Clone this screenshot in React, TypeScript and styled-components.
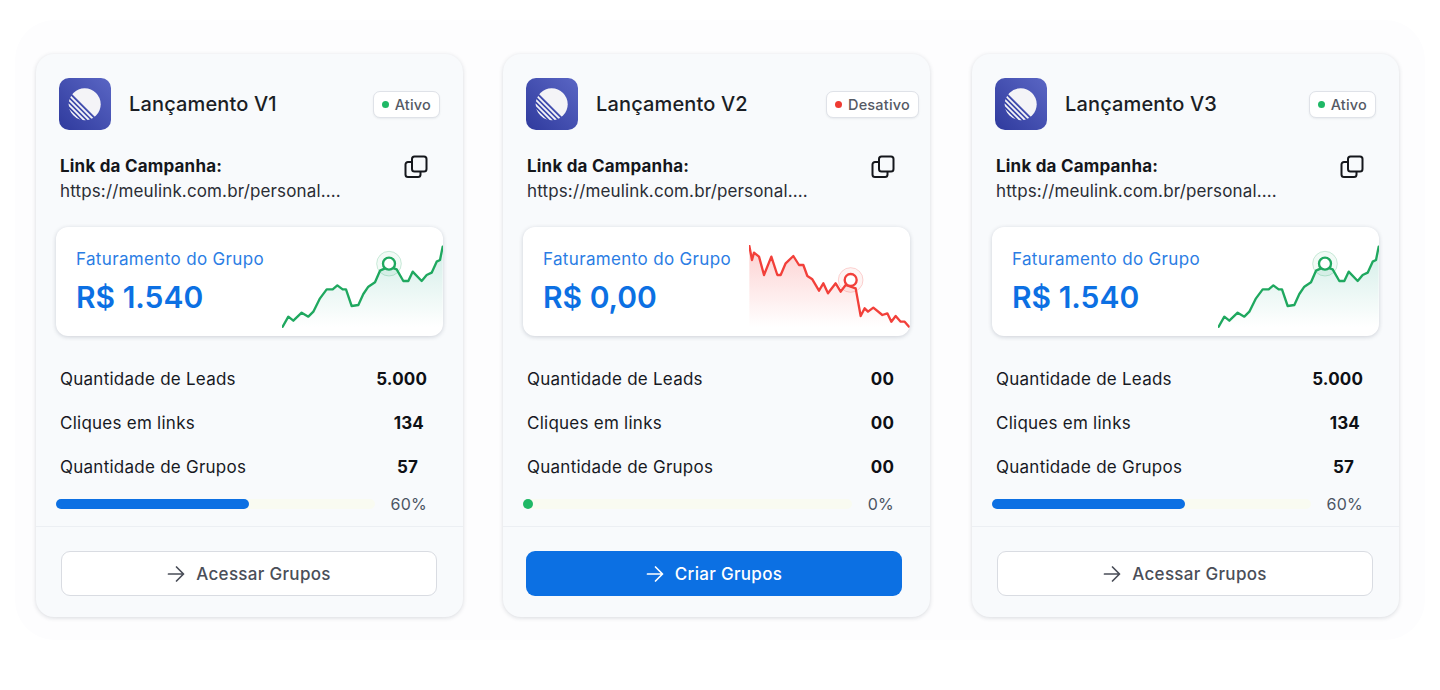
import { createGlobalStyle, styled } from 'styled-components'

const GlobalStyle = createGlobalStyle`
  html, body {
    margin: 0;
    background: #fff;
    font-family: Inter, 'Liberation Sans', sans-serif;
    -webkit-font-smoothing: antialiased;
  }
`

const Backdrop = styled.main`
  box-sizing: border-box;
  width: 1410px;
  height: 620px;
  margin: 20px 0 0 15px;
  padding: 34px 0 0 21px;
  background: #fdfdfe;
  border-radius: 40px;
`

const Cards = styled.div`
  display: grid;
  grid-template-columns: 467px 469px 427px;
`

const Card = styled.article`
  box-sizing: border-box;
  display: flex;
  flex-direction: column;
  width: 427px;
  height: 563px;
  padding-top: 24px;
  background: #f8fafc;
  border-radius: 18px;
  box-shadow: 0 1px 4px rgba(50, 60, 80, 0.18);
`

const Header = styled.header<{ $badgeInset: number }>`
  display: flex;
  align-items: center;
  gap: 18px;
  padding: 0 ${(p) => p.$badgeInset}px 0 23px;
`

const Title = styled.h2`
  flex: 1;
  margin: 0;
  font-size: 20px;
  font-weight: 500;
  letter-spacing: 0.15px;
  color: #1b1e25;
`

const Badge = styled.span`
  display: flex;
  align-items: center;
  gap: 6px;
  height: 27px;
  box-sizing: border-box;
  padding: 0 8px;
  font-size: 14.5px;
  font-weight: 450;
  letter-spacing: 0.2px;
  color: #555a65;
  background: #fff;
  border: 1.5px solid #dfe2e8;
  border-radius: 7px;
  box-shadow: 0 1px 2px rgba(50, 60, 80, 0.08);
`

const Dot = styled.i<{ $color: string }>`
  width: 7px;
  height: 7px;
  border-radius: 50%;
  background: ${(p) => p.$color};
`

const LinkBlock = styled.section`
  display: flex;
  justify-content: space-between;
  padding: 24px 35px 0 24px;
`

const LinkLabel = styled.div`
  font-size: 17px;
  font-weight: 700;
  line-height: 24px;
  letter-spacing: 0.2px;
  color: #14161b;
`

const LinkUrl = styled.div`
  font-size: 17px;
  line-height: 26px;
  letter-spacing: 0.14px;
  color: #2a2d34;
`

const Revenue = styled.section`
  display: flex;
  justify-content: space-between;
  align-items: flex-end;
  height: 109px;
  margin: 23px 20px 0;
  background: #fff;
  border-radius: 12px;
  box-shadow: 0 1px 4px rgba(50, 60, 80, 0.22);
  overflow: hidden;
`

const RevenueText = styled.div`
  align-self: flex-start;
  padding: 21px 0 0 20px;
`

const RevenueLabel = styled.div`
  font-size: 17px;
  line-height: 22px;
  letter-spacing: 0.35px;
  color: #2b7de4;
`

const RevenueValue = styled.div`
  margin-top: 7px;
  font-size: 30px;
  line-height: 40px;
  font-weight: 600;
  color: #0c70e3;
`

const Stats = styled.dl`
  margin: 21px 36px 0 24px;
`

const StatRow = styled.div`
  display: flex;
  justify-content: space-between;
  align-items: center;
  height: 44px;
`

const StatName = styled.dt`
  font-size: 17px;
  font-weight: 420;
  letter-spacing: 0.25px;
  color: #17191f;
`

const StatValue = styled.dd<{ $inset: number }>`
  margin: 0;
  padding-right: ${(p) => p.$inset}px;
  font-size: 17px;
  font-weight: 700;
  letter-spacing: 0.15px;
  color: #0e1015;
`

const Progress = styled.div`
  display: flex;
  align-items: center;
  gap: 16px;
  height: 22px;
  margin: 4px 36px 0 20px;
`

const Track = styled.div`
  flex: 1;
  height: 10px;
  border-radius: 5px;
  background: #f9fbf1;
`

const Fill = styled.div<{ $empty: boolean }>`
  height: 10px;
  min-width: 10px;
  border-radius: 5px;
  background: ${(p) => (p.$empty ? '#1fb866' : '#0c70e3')};
`

const Percent = styled.span`
  font-size: 16px;
  letter-spacing: 0.25px;
  color: #4b5563;
`

const Footer = styled.footer<{ $inset: number }>`
  margin-top: 11px;
  padding: 24px ${(p) => 51 - p.$inset}px 21px ${(p) => p.$inset}px;
  border-top: 1px solid #eceff3;
`

const ActionButton = styled.button<{ $primary: boolean }>`
  display: flex;
  align-items: center;
  justify-content: center;
  gap: 11px;
  box-sizing: border-box;
  width: 100%;
  height: 45px;
  font: 500 17px Inter, sans-serif;
  letter-spacing: 0.3px;
  border-radius: 9px;
  color: ${(p) => (p.$primary ? '#fff' : '#4a4e58')};
  background: ${(p) => (p.$primary ? '#0c70e3' : '#fff')};
  border: ${(p) => (p.$primary ? 'none' : '1.5px solid #d9dce2')};
`

const Logo = () => (
  <svg width="52" height="52" viewBox="0 0 52 52" style={{ flex: 'none' }}>
    <defs>
      <linearGradient id="logoBg" x1="1" y1="0" x2="0" y2="1">
        <stop offset="0" stopColor="#5a66c4" />
        <stop offset="1" stopColor="#2f3a9d" />
      </linearGradient>
      <clipPath id="logoDisc">
        <circle cx="25.7" cy="26.2" r="16" />
      </clipPath>
    </defs>
    <rect width="52" height="52" rx="10" fill="url(#logoBg)" />
    <g clipPath="url(#logoDisc)" stroke="#f4f4f7" strokeWidth="1.9">
      <path d="M0 3 L50 53 L52 0 Z" fill="#f4f4f7" stroke="none" />
      <path d="M0 7 L50 57 M0 12 L50 62 M0 17 L50 67 M0 22 L50 72" />
    </g>
  </svg>
)

const CopyIcon = () => (
  <svg width="24" height="24" viewBox="0 0 24 24" fill="none" stroke="#15171c" strokeWidth="2" style={{ flex: 'none', marginTop: 1 }}>
    <rect x="8" y="1.5" width="14.5" height="15" rx="2.5" />
    <path d="M8 7H4a2.5 2.5 0 0 0-2.5 2.5v10A2.5 2.5 0 0 0 4 22h10a2.5 2.5 0 0 0 2.5-2.5v-3" />
  </svg>
)

const ArrowIcon = () => (
  <svg width="18" height="18" viewBox="0 0 18 18" fill="none" stroke="currentColor" strokeWidth="1.7" strokeLinecap="round" strokeLinejoin="round">
    <path d="M1.5 9h15M9.5 2l7 7-7 7" />
  </svg>
)

// points are read off the reference at 3x, hence the large viewBox
const RISING =
  '698,320 715,290 730,302 755,278 775,290 790,275 810,235 830,208 848,208 862,196 878,208 888,208 905,258 925,255 940,222 955,200 975,187 990,152 1017,140 1040,148 1060,183 1075,183 1088,155 1115,183 1130,165 1145,158 1160,125 1170,120 1178,80'
const FALLING =
  '706,78 714,120 720,98 735,110 750,165 772,110 790,165 800,165 815,130 838,108 855,135 868,135 880,168 895,178 915,212 928,190 942,220 965,190 980,215 995,195 1025,205 1040,288 1052,265 1062,275 1078,263 1105,285 1120,280 1132,305 1145,288 1160,305 1172,305 1185,320'

interface ISparkProps {
  id: string
  points: string
  color: string
  tint: string
  box: string
  cx: number
  cy: number
}

const Sparkline = ({ id, points, color, tint, box, cx, cy }: ISparkProps) => {
  const first = points.split(' ')[0].split(',')[0]
  const last = points.split(' ').slice(-1)[0].split(',')[0]
  return (
    <svg width="161" height="91" viewBox={box} style={{ flex: 'none' }}>
      <defs>
        <linearGradient id={id} x1="0" y1="0" x2="0" y2="1">
          <stop offset="0" stopColor={tint} stopOpacity="0.4" />
          <stop offset="0.9" stopColor={tint} stopOpacity="0" />
        </linearGradient>
      </defs>
      <polygon points={`${first},348 ${points} ${last},348`} fill={`url(#${id})`} />
      <polyline points={points} fill="none" stroke={color} strokeWidth="7" strokeLinejoin="round" strokeLinecap="round" />
      <circle cx={cx} cy={cy} r="37" fill={color} fillOpacity="0.06" stroke={color} strokeOpacity="0.22" strokeWidth="3" />
      <circle cx={cx} cy={cy} r="18" fill="#fff" stroke={color} strokeWidth="7" />
    </svg>
  )
}

interface IStat {
  name: string
  value: string
  inset: number
}

interface ICampaign {
  name: string
  active: boolean
  badgeInset: number
  revenue: string
  percent: number
  stats: IStat[]
  action: string
  primary: boolean
  footerInset: number
}

const filled: IStat[] = [
  { name: 'Quantidade de Leads', value: '5.000', inset: 0 },
  { name: 'Cliques em links', value: '134', inset: 3 },
  { name: 'Quantidade de Grupos', value: '57', inset: 9 },
]

const empty: IStat[] = [
  { name: 'Quantidade de Leads', value: '00', inset: 0 },
  { name: 'Cliques em links', value: '00', inset: 0 },
  { name: 'Quantidade de Grupos', value: '00', inset: 0 },
]

const campaigns: ICampaign[] = [
  { name: 'Lançamento V1', active: true, badgeInset: 23, revenue: 'R$ 1.540', percent: 60, stats: filled, action: 'Acessar Grupos', primary: false, footerInset: 25 },
  { name: 'Lançamento V2', active: false, badgeInset: 11, revenue: 'R$ 0,00', percent: 0, stats: empty, action: 'Criar Grupos', primary: true, footerInset: 23 },
  { name: 'Lançamento V3', active: true, badgeInset: 23, revenue: 'R$ 1.540', percent: 60, stats: filled, action: 'Acessar Grupos', primary: false, footerInset: 25 },
]

const CampaignCard = ({ campaign, index }: { campaign: ICampaign; index: number }) => (
  <Card>
    <Header $badgeInset={campaign.badgeInset}>
      <Logo />
      <Title>{campaign.name}</Title>
      <Badge>
        <Dot $color={campaign.active ? '#1fb866' : '#ef3b32'} />
        {campaign.active ? 'Ativo' : 'Desativo'}
      </Badge>
    </Header>
    <LinkBlock>
      <div>
        <LinkLabel>Link da Campanha:</LinkLabel>
        <LinkUrl>https://meulink.com.br/personal....</LinkUrl>
      </div>
      <CopyIcon />
    </LinkBlock>
    <Revenue>
      <RevenueText>
        <RevenueLabel>Faturamento do Grupo</RevenueLabel>
        <RevenueValue>{campaign.revenue}</RevenueValue>
      </RevenueText>
      {campaign.active ? (
        <Sparkline id={`spark${index}`} points={RISING} color="#1fa85f" tint="#8fd3c4" box="696 75 483 273" cx={1017} cy={131} />
      ) : (
        <Sparkline id={`spark${index}`} points={FALLING} color="#f2403a" tint="#f98b8b" box="705 75 483 273" cx={1010} cy={180} />
      )}
    </Revenue>
    <Stats>
      {campaign.stats.map((s) => (
        <StatRow key={s.name}>
          <StatName>{s.name}</StatName>
          <StatValue $inset={s.inset}>{s.value}</StatValue>
        </StatRow>
      ))}
    </Stats>
    <Progress>
      <Track>
        <Fill $empty={campaign.percent === 0} style={{ width: `calc(${campaign.percent}% + 2px)` }} />
      </Track>
      <Percent>{campaign.percent}%</Percent>
    </Progress>
    <Footer $inset={campaign.footerInset}>
      <ActionButton $primary={campaign.primary}>
        <ArrowIcon />
        {campaign.action}
      </ActionButton>
    </Footer>
  </Card>
)

export default function App() {
  return (
    <>
      <GlobalStyle />
      <Backdrop>
        <Cards>
          {campaigns.map((c, i) => (
            <CampaignCard key={c.name} campaign={c} index={i} />
          ))}
        </Cards>
      </Backdrop>
    </>
  )
}
